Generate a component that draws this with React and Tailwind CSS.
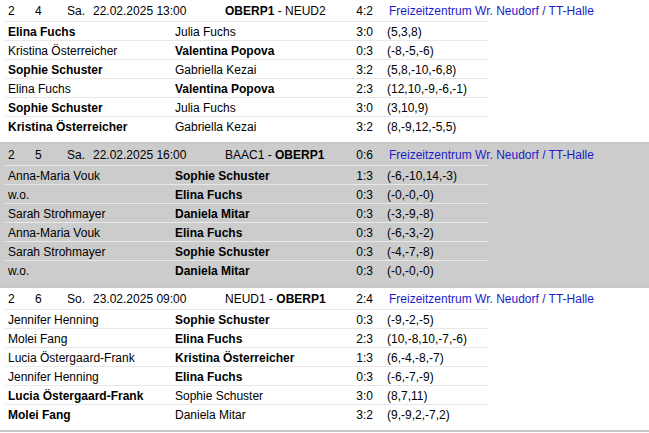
const LOCATION = 'Freizeitzentrum Wr. Neudorf / TT-Halle'

const games = [
  {
    round: '2',
    no: '4',
    day: 'Sa.',
    date: '22.02.2025 13:00',
    home: 'OBERP1',
    away: 'NEUD2',
    ownHome: true,
    result: '4:2',
    shaded: false,
    matches: [
      ['Elina Fuchs', 'Julia Fuchs', '3:0', '(5,3,8)', 1],
      ['Kristina Österreicher', 'Valentina Popova', '0:3', '(-8,-5,-6)', 2],
      ['Sophie Schuster', 'Gabriella Kezai', '3:2', '(5,8,-10,-6,8)', 1],
      ['Elina Fuchs', 'Valentina Popova', '2:3', '(12,10,-9,-6,-1)', 2],
      ['Sophie Schuster', 'Julia Fuchs', '3:0', '(3,10,9)', 1],
      ['Kristina Österreicher', 'Gabriella Kezai', '3:2', '(8,-9,12,-5,5)', 1],
    ],
  },
  {
    round: '2',
    no: '5',
    day: 'Sa.',
    date: '22.02.2025 16:00',
    home: 'BAAC1',
    away: 'OBERP1',
    ownHome: false,
    result: '0:6',
    shaded: true,
    matches: [
      ['Anna-Maria Vouk', 'Sophie Schuster', '1:3', '(-6,-10,14,-3)', 2],
      ['w.o.', 'Elina Fuchs', '0:3', '(-0,-0,-0)', 2],
      ['Sarah Strohmayer', 'Daniela Mitar', '0:3', '(-3,-9,-8)', 2],
      ['Anna-Maria Vouk', 'Elina Fuchs', '0:3', '(-6,-3,-2)', 2],
      ['Sarah Strohmayer', 'Sophie Schuster', '0:3', '(-4,-7,-8)', 2],
      ['w.o.', 'Daniela Mitar', '0:3', '(-0,-0,-0)', 2],
    ],
  },
  {
    round: '2',
    no: '6',
    day: 'So.',
    date: '23.02.2025 09:00',
    home: 'NEUD1',
    away: 'OBERP1',
    ownHome: false,
    result: '2:4',
    shaded: false,
    matches: [
      ['Jennifer Henning', 'Sophie Schuster', '0:3', '(-9,-2,-5)', 2],
      ['Molei Fang', 'Elina Fuchs', '2:3', '(10,-8,10,-7,-6)', 2],
      ['Lucia Östergaard-Frank', 'Kristina Österreicher', '1:3', '(6,-4,-8,-7)', 2],
      ['Jennifer Henning', 'Elina Fuchs', '0:3', '(-6,-7,-9)', 2],
      ['Lucia Östergaard-Frank', 'Sophie Schuster', '3:0', '(8,7,11)', 1],
      ['Molei Fang', 'Daniela Mitar', '3:2', '(9,-9,2,-7,2)', 1],
    ],
  },
]

const Game = ({ game }) => (
  <div
    className={`pl-[5px] pb-[7px] border-b-2 border-[#c8c8c8] ${
      game.shaded ? 'bg-[#cccccc]' : 'bg-white'
    }`}
  >
    {/* header row */}
    <div className="flex items-center h-[21px] whitespace-nowrap">
      <span className="w-[27px] pl-[3px]">{game.round}</span>
      <span className="w-[32px] pl-[3px]">{game.no}</span>
      <span className="w-[26px] pl-[3px]">{game.day}</span>
      <span className="w-[132px] pl-[3px]">{game.date}</span>
      <span className="w-[118px] pl-[3px]">
        <span className={game.ownHome ? 'font-bold' : ''}>{game.home}</span>
        {' - '}
        <span className={game.ownHome ? '' : 'font-bold'}>{game.away}</span>
      </span>
      <span className="w-[36px] pr-[3px] text-right">{game.result}</span>
      <span className="pl-[13px] text-[#1c1cc8]">{LOCATION}</span>
    </div>

    {/* single matches */}
    <div className="w-[483px]">
      {game.matches.map(([p1, p2, score, sets, winner], i) => (
        <div
          key={i}
          className="flex items-center h-[19px] pt-[2px] border-t border-[#e8e8e8] whitespace-nowrap"
        >
          <span className={`w-[167px] pl-[3px] ${winner === 1 ? 'font-bold' : ''}`}>{p1}</span>
          <span className={`w-[168px] pl-[3px] ${winner === 2 ? 'font-bold' : ''}`}>{p2}</span>
          <span className="w-[36px] pr-[3px] text-right">{score}</span>
          <span className="pl-[11px]">{sets}</span>
        </div>
      ))}
    </div>
  </div>
)

const App = () => {
  return (
    <div className="w-[649px] h-[433px] overflow-hidden bg-white text-[12px] leading-[14px] text-black font-['Liberation_Sans',Arial,sans-serif]">
      {games.map((game, i) => (
        <Game key={i} game={game} />
      ))}
    </div>
  )
}

export default App
